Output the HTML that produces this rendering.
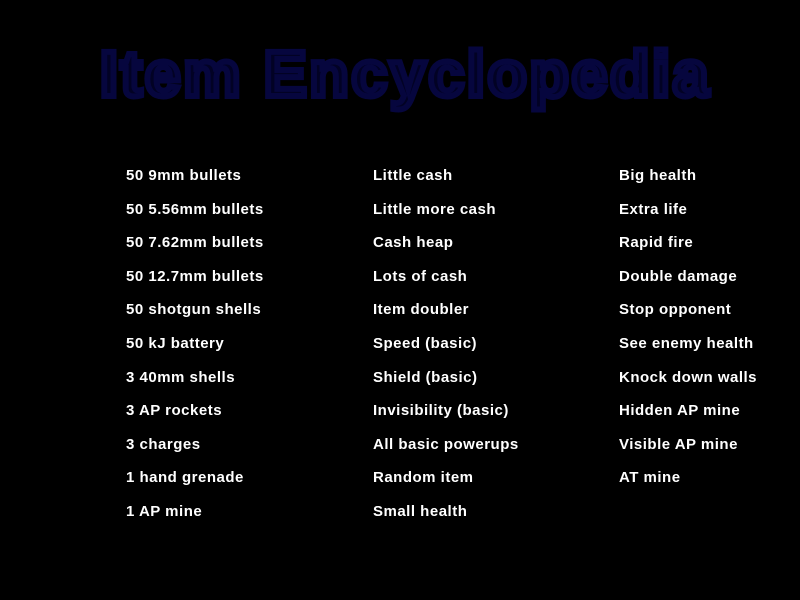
<!DOCTYPE html>
<html><head><style>
body{margin:0;width:800px;height:600px;background:#000;overflow:hidden;position:relative;font-family:"Liberation Sans",sans-serif}
.t{position:absolute;left:100px;top:36px;font-size:64px;font-weight:bold;color:#020224;-webkit-text-stroke:6px #06063e;letter-spacing:2.9px;white-space:nowrap;line-height:76px}
.c{position:absolute;top:159px;color:#fff;font-weight:bold;font-size:15px;letter-spacing:0.5px;line-height:33.6px;white-space:nowrap}
</style></head><body>
<div class="t">Item Encyclopedia</div>
<div class="c" style="left:126px">50 9mm bullets<br>50 5.56mm bullets<br>50 7.62mm bullets<br>50 12.7mm bullets<br>50 shotgun shells<br>50 kJ battery<br>3 40mm shells<br>3 AP rockets<br>3 charges<br>1 hand grenade<br>1 AP mine</div>
<div class="c" style="left:373px">Little cash<br>Little more cash<br>Cash heap<br>Lots of cash<br>Item doubler<br>Speed (basic)<br>Shield (basic)<br>Invisibility (basic)<br>All basic powerups<br>Random item<br>Small health</div>
<div class="c" style="left:619px">Big health<br>Extra life<br>Rapid fire<br>Double damage<br>Stop opponent<br>See enemy health<br>Knock down walls<br>Hidden AP mine<br>Visible AP mine<br>AT mine</div>
</body></html>
